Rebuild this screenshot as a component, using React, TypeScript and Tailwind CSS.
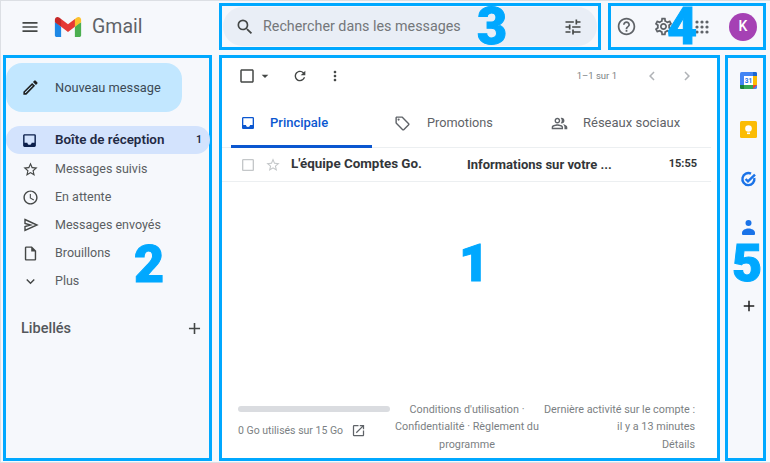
import type { ReactNode } from "react";
import {
  MdAdd,
  MdArrowDropDown,
  MdCheckBoxOutlineBlank,
  MdChevronLeft,
  MdChevronRight,
  MdExpandMore,
  MdInbox,
  MdMenu,
  MdMoreVert,
  MdOpenInNew,
  MdOutlineCreate,
  MdOutlineHelpOutline,
  MdOutlineInsertDriveFile,
  MdOutlineLocalOffer,
  MdOutlinePeopleAlt,
  MdOutlineSettings,
  MdOutlineStarBorder,
  MdAccessTime,
  MdRefresh,
  MdSearch,
  MdTune,
} from "react-icons/md";

const FONT = "font-['Roboto','Liberation_Sans',sans-serif]";

function SentIcon() {
  return (
    <svg width="16" height="16" viewBox="0 0 16 16" fill="none" stroke="currentColor" strokeWidth="1.4" strokeLinejoin="miter">
      <path d="M2 2.500L14 8 2 13.500V9.500L7.500 8 2 6.500z" />
    </svg>
  );
}

const NAV = [
  { label: "Messages suivis", icon: <MdOutlineStarBorder size={17} /> },
  { label: "En attente", icon: <MdAccessTime size={17} /> },
  { label: "Messages envoyés", icon: <SentIcon /> },
  { label: "Brouillons", icon: <MdOutlineInsertDriveFile size={17} /> },
  { label: "Plus", icon: <MdExpandMore size={17} /> },
];

function Num({ children, className }: { children: ReactNode; className: string }) {
  return (
    <span
      className={`absolute font-['Roboto',sans-serif] font-black text-[52px] leading-[40px] text-[#00a8ff] [-webkit-text-stroke:1px_#00a8ff] ${className}`}
    >
      {children}
    </span>
  );
}

function GmailLogo() {
  return (
    <svg width="30" height="30" viewBox="0 0 48 48">
      <path fill="#4caf50" d="M45,16.2l-5,2.75l-5,4.75L35,40h7c1.657,0,3-1.343,3-3V16.2z" />
      <path fill="#1e88e5" d="M3,16.2l3.614,1.71L13,23.7V40H6c-1.657,0-3-1.343-3-3V16.2z" />
      <polygon fill="#e53935" points="35,11.2 24,19.45 13,11.2 12,17 13,23.7 24,31.95 35,23.7 36,17" />
      <path fill="#c62828" d="M3,12.298V16.2l10,7.5V11.2L9.876,8.859C9.132,8.301,8.228,8,7.298,8h0C4.924,8,3,9.924,3,12.298z" />
      <path fill="#fbc02d" d="M45,12.298V16.2l-10,7.5V11.2l3.124-2.341C38.868,8.301,39.772,8,40.702,8h0C43.076,8,45,9.924,45,12.298z" />
    </svg>
  );
}

function AppsIcon({ className }: { className: string }) {
  const dots = [3, 8, 13];
  return (
    <svg width="16" height="16" viewBox="0 0 16 16" className={className}>
      {dots.map((y) =>
        dots.map((x) => <circle key={`${x}-${y}`} cx={x} cy={y} r="1.6" fill="#5f6368" />)
      )}
    </svg>
  );
}

function CalendarIcon() {
  return (
    <svg width="17" height="17" viewBox="0 0 17 17">
      <rect width="17" height="17" rx="1.5" fill="#4285f4" />
      <rect x="4" y="4" width="9" height="9" fill="#fff" />
      <path d="M13 0h2.5A1.5 1.5 0 0 1 17 1.5V4h-4z" fill="#1967d2" />
      <path d="M13 4h4v9h-4z" fill="#fbbc04" />
      <path d="M4 13h9v4H4z" fill="#34a853" />
      <path d="M0 13h4v4H1.5A1.5 1.5 0 0 1 0 15.5z" fill="#188038" />
      <path d="M13 13h4l-4 4z" fill="#ea4335" />
      <text x="8.5" y="11" textAnchor="middle" fontSize="6.5" fontWeight="700" fill="#1a73e8" fontFamily="Roboto, sans-serif">
        31
      </text>
    </svg>
  );
}

function KeepIcon() {
  return (
    <svg width="17" height="17" viewBox="0 0 17 17">
      <rect width="17" height="17" rx="1.5" fill="#fbbc04" />
      <circle cx="8.5" cy="7.5" r="3.3" fill="#fff" />
      <rect x="7" y="11.5" width="3" height="1.6" fill="#fff" />
    </svg>
  );
}

function TasksIcon() {
  return (
    <svg width="17" height="17" viewBox="0 0 17 17" fill="none">
      <path d="M14.3 7a6 6 0 1 1-3.3-4.3" stroke="#1a73e8" strokeWidth="2.4" />
      <path d="M5.6 8l2.4 2.4L15 3.6" stroke="#1a73e8" strokeWidth="2.4" />
    </svg>
  );
}

function ContactsIcon() {
  return (
    <svg width="13" height="15" viewBox="0 0 13 15">
      <circle cx="6.5" cy="3" r="3" fill="#1a73e8" />
      <path d="M1 15a1 1 0 0 1-1-1v-1.500C0 10 3.600 8.400 6.500 8.400S13 10 13 12.500V14a1 1 0 0 1-1 1z" fill="#1a73e8" />
    </svg>
  );
}

export default function App() {
  return (
    <div className={`relative w-[770px] h-[463px] flex flex-col gap-[5px] bg-[#f6f8fc] border-t border-l border-b border-[#dcdfe4] pt-[2px] pb-px pl-[2px] pr-[4px] ${FONT}`}>
      <header className="flex h-[47px] shrink-0">
        <div className="w-[216px] flex items-center text-[#444746] pl-[17px]">
          <MdMenu size={20} />
          <div className="ml-[13px]">
            <GmailLogo />
          </div>
          <span className="ml-[9px] text-[19.500px] text-[#5f6368] leading-none">Gmail</span>
        </div>

        <div className="w-[382px] border-[3px] border-[#00a8ff] p-px">
          <div className="h-full rounded-full bg-[#e9eef6] flex items-center pl-[12px] pr-[14px] text-[#444746]">
            <MdSearch size={20} />
            <span className="ml-[8px] text-[14.300px] text-[#74777a]">Rechercher dans les messages</span>
            <MdTune size={20} className="ml-auto" />
          </div>
        </div>

        <div className="w-[158px] ml-[7px] border-[3px] border-[#00a8ff] flex items-center text-[#5f6368] pl-[5px]">
          <MdOutlineHelpOutline size={21} />
          <MdOutlineSettings size={21} className="ml-[16px]" />
          <AppsIcon className="ml-[20px]" />
          <div className="ml-[19px] w-[28px] h-[28px] rounded-full bg-[#a541b4] text-white text-[14px] font-medium flex items-center justify-center">
            K
          </div>
        </div>
      </header>

      <div className="flex flex-1 min-h-0">
        <aside className="w-[209px] border-[3px] border-[#00a8ff] pt-[5px]">
          <button className="w-[176px] h-[49px] rounded-[16px] bg-[#c2e7ff] flex items-center pl-[15px] text-[#3c4a56]">
            <MdOutlineCreate size={19} className="text-[#1f1f1f]" />
            <span className="ml-[15px] text-[12.800px] font-normal">Nouveau message</span>
          </button>

          <div className="mt-[14px] h-[28px] w-[204px] rounded-full bg-[#d3e3fd] flex items-center pl-[15px] pr-[8px] text-[#1f2a44]">
            <MdInbox size={17} className="text-[#0b1f4b]" />
            <span className="ml-[17px] text-[13.400px] font-semibold">Boîte de réception</span>
            <span className="ml-auto text-[10.500px] font-semibold">1</span>
          </div>

          <div className="mt-px">
            {NAV.map((n) => (
              <div key={n.label} className="h-[28px] flex items-center text-[#444746]">
                <span className="w-[49px] flex justify-center px-px">{n.icon}</span>
                <span className="text-[12.500px] text-[#5a5e62]">{n.label}</span>
              </div>
            ))}
          </div>

          <div className="mt-[23px] flex items-center justify-between pl-[15px] pr-[5px] text-[#444746]">
            <span className="text-[14.500px] font-medium text-[#53575b]">Libellés</span>
            <MdAdd size={19} />
          </div>
        </aside>

        <main className="w-[501px] ml-[7px] border-[3px] border-[#00a8ff] bg-white flex flex-col">
          <div className="h-[36px] flex items-center pl-[16px] pr-[21px] text-[#444746] shrink-0">
            <MdCheckBoxOutlineBlank size={18} />
            <MdArrowDropDown size={16} className="ml-px" />
            <MdRefresh size={16} className="ml-[19px]" />
            <MdMoreVert size={16} className="ml-[19px]" />
            <span className="ml-auto text-[9.500px] text-[#7b7f83]">1–1 sur 1</span>
            <MdChevronLeft size={18} className="ml-[26px] text-[#b0b3b7]" />
            <MdChevronRight size={18} className="ml-[17px] text-[#b0b3b7]" />
          </div>

          <div className="mt-[9px] h-[45px] mr-[6px] flex border-b border-[#eceff1] shrink-0">
            <div className="w-[141px] ml-[9px] border-b-[3px] border-[#0b57d0] -mb-px flex items-center pl-[9px] text-[#0b57d0] pb-[3px] h-[45px]">
              <MdInbox size={16} />
              <span className="ml-[14px] text-[13px] font-medium">Principale</span>
            </div>
            <div className="w-[157px] pl-[22px] flex items-center text-[#5f6368] pb-[4px]">
              <MdOutlineLocalOffer size={17} />
              <span className="ml-[16px] text-[12.700px]">Promotions</span>
            </div>
            <div className="flex-1 pl-[22px] flex items-center text-[#5f6368] pb-[4px]">
              <MdOutlinePeopleAlt size={17} />
              <span className="ml-[15px] text-[13px]">Réseaux sociaux</span>
            </div>
          </div>

          <div className="h-[34px] mr-[6px] flex items-center border-b border-[#eceff1] pl-[18px] pr-[14px] shrink-0">
            <MdCheckBoxOutlineBlank size={16} className="text-[#c4c7c9]" />
            <MdOutlineStarBorder size={16} className="ml-[9px] text-[#c4c7c9]" />
            <span className="ml-[10px] w-[176px] text-[13.400px] font-bold text-[#333639]">L'équipe Comptes Go.</span>
            <span className="text-[13px] font-bold text-[#333639]">Informations sur votre ...</span>
            <span className="ml-auto text-[11px] font-bold text-[#333639]">15:55</span>
          </div>

          <div className="flex-1" />

          <footer className="flex pl-[16px] pr-[22px] pb-[5px] text-[10.500px] leading-[17.500px] text-[#7b7f83]">
            <div className="w-[152px] pt-[5px]">
              <div className="h-[6px] rounded-full bg-[#dadce0]" />
              <div className="mt-[10px] flex items-center whitespace-nowrap">
                <span>0 Go utilisés sur 15 Go</span>
                <MdOpenInNew size={15} className="ml-[8px] text-[#5f6368]" />
              </div>
            </div>
            <div className="w-[154px] text-center text-[10.800px]">
              Conditions d'utilisation ·<br />
              Confidentialité · Règlement du<br />
              programme
            </div>
            <div className="flex-1 text-right whitespace-nowrap text-[10.800px]">
              Dernière activité sur le compte :<br />
              il y a 13 minutes<br />
              Détails
            </div>
          </footer>
        </main>

        <aside className="w-[41px] ml-[5px] border-[3px] border-[#00a8ff] flex flex-col items-center pt-[14px] pl-[6px]">
          <CalendarIcon />
          <div className="mt-[32px]">
            <KeepIcon />
          </div>
          <div className="mt-[33px]">
            <TasksIcon />
          </div>
          <div className="mt-[32px]">
            <ContactsIcon />
          </div>
          <MdAdd size={18} className="mt-[62px] text-[#1f1f1f]" />
        </aside>
      </div>

      <Num className="left-[458px] top-[243px]">1</Num>
      <Num className="left-[133px] top-[244px]">2</Num>
      <Num className="left-[476px] top-[6px]">3</Num>
      <Num className="left-[666px] top-[6px]">4</Num>
      <Num className="left-[731px] top-[243px]">5</Num>
    </div>
  );
}
